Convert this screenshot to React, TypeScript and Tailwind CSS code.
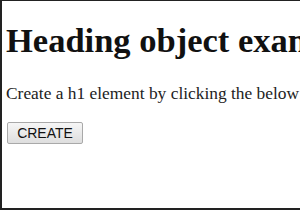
export default function App() {
  return (
    <div className="w-[300px] h-[210px] overflow-hidden bg-white border-t border-l-2 border-b-2 border-[#222] whitespace-nowrap">
      <div className="pl-[4px] text-[#111]" style={{ fontFamily: '"Liberation Serif", serif' }}>
        <h1 className="mt-[20px] text-[34.5px] leading-[38px] font-bold">Heading object example</h1>
        <p className="mt-[25px] text-[17.4px] leading-[19px] text-[#222]">
          Create a h1 element by clicking the below button
        </p>
        <button
          className="ml-px mt-[19px] h-[22px] w-[76px] rounded-[2px] border border-[#a9a9a9] bg-gradient-to-b from-[#f6f6f6] to-[#dedede] text-[14px] leading-none text-[#111]"
          style={{ fontFamily: '"Liberation Sans", Arial, sans-serif' }}
        >
          CREATE
        </button>
      </div>
    </div>
  );
}
